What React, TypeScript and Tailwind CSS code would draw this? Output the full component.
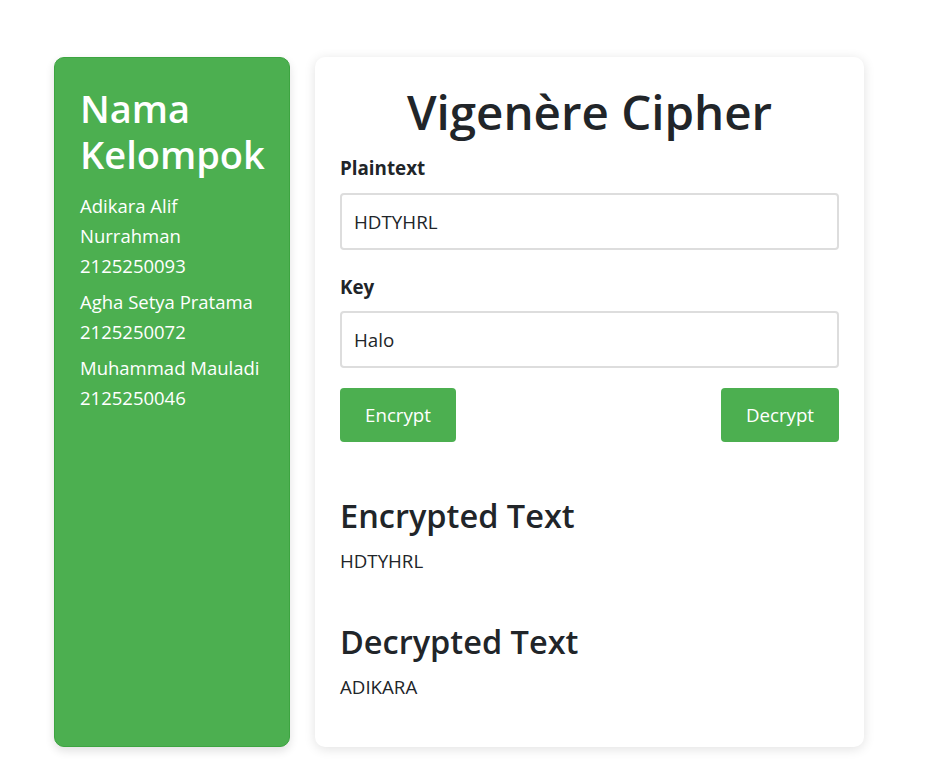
import React, { useState } from 'react';

const members = [
  { name: 'Adikara Alif Nurrahman', nim: '2125250093' },
  { name: 'Agha Setya Pratama', nim: '2125250072' },
  { name: 'Muhammad Mauladi', nim: '2125250046' },
];

const App: React.FC = () => {
  const [plain, setPlain] = useState('HDTYHRL');
  const [key, setKey] = useState('Halo');

  return (
    <div className="min-h-screen bg-white pl-[54px] pt-[57px] font-['Open_Sans',sans-serif] text-[#212529]">
      <div className="flex items-stretch gap-[25px]">
        {/* Sidebar */}
        <aside className="w-[236px] shrink-0 rounded-[10px] border border-[#3da541] bg-[#4caf50] px-[25px] pt-[27px] text-white shadow-[0_4px_10px_rgba(0,0,0,0.12)]">
          <h2 className="mb-[14px] text-[38px] font-semibold leading-[46px]">Nama Kelompok</h2>
          {members.map((m) => (
            <p key={m.nim} className="mb-[6px] text-[18.5px] leading-[30px]">
              {m.name}
              <br />
              {m.nim}
            </p>
          ))}
        </aside>

        {/* Main card */}
        <main className="w-[549px] rounded-[10px] bg-white px-[25px] pt-[25px] pb-[46px] shadow-[0_2px_12px_rgba(0,0,0,0.12)]">
          <h1 className="mb-[13px] text-center text-[47.5px] font-semibold leading-[60px]">Vigenère Cipher</h1>

          <label className="mb-[12px] block text-[18.8px] font-bold leading-[26px]">Plaintext</label>
          <input
            value={plain}
            onChange={(e) => setPlain(e.target.value)}
            className="mb-[24px] h-[57px] w-full rounded-[4px] border-2 border-[#dddddd] px-[12px] text-[18.8px] outline-none"
          />

          <label className="mb-[11px] block text-[18.8px] font-bold leading-[26px]">Key</label>
          <input
            value={key}
            onChange={(e) => setKey(e.target.value)}
            className="mb-[20px] h-[57px] w-full rounded-[4px] border-2 border-[#dddddd] px-[12px] text-[18.8px] outline-none"
          />

          <div className="mb-[54px] flex justify-between">
            <button className="h-[54px] w-[116px] rounded-[4px] bg-[#4caf50] text-[18.7px] text-white">Encrypt</button>
            <button className="h-[54px] w-[118px] rounded-[4px] bg-[#4caf50] text-[18.7px] text-white">Decrypt</button>
          </div>

          <h2 className="mb-[11px] text-[32.5px] font-semibold leading-[40px]">Encrypted Text</h2>
          <p className="mb-[47px] text-[18.7px] leading-[28px]">HDTYHRL</p>

          <h2 className="mb-[11px] text-[32.5px] font-semibold leading-[40px]">Decrypted Text</h2>
          <p className="text-[18.7px] leading-[28px]">ADIKARA</p>
        </main>
      </div>
    </div>
  );
};

export default App;
